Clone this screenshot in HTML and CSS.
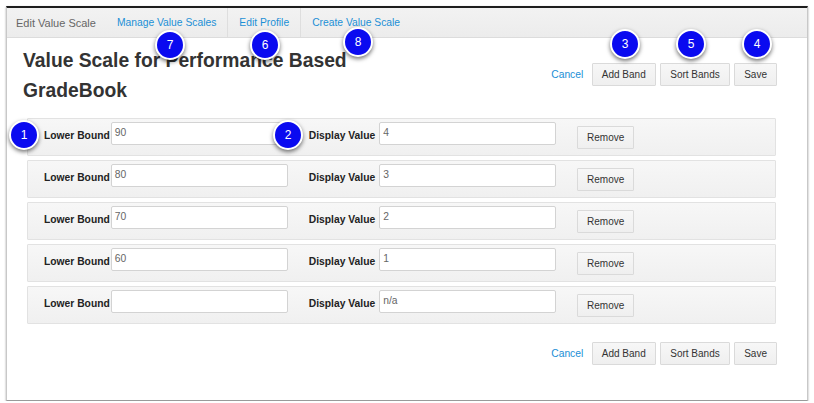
FILE: index.html
```html
<!DOCTYPE html>
<html>
<head>
<meta charset="utf-8">
<link rel="stylesheet" href="styles.css">
</head>
<body>
<div class="window">
  <nav class="nav">
    <span class="brand">Edit Value Scale</span>
    <a class="nav-link">Manage Value Scales</a>
    <a class="nav-link sep">Edit Profile</a>
    <a class="nav-link sep">Create Value Scale</a>
  </nav>
  <main class="content">
    <div class="header">
      <h1 class="title">Value Scale for Performance Based GradeBook</h1>
      <div class="actions">
        <a class="cancel">Cancel</a>
        <button class="btn">Add Band</button>
        <button class="btn">Sort Bands</button>
        <button class="btn">Save</button>
      </div>
    </div>
    <div class="bands">
      <div class="band">
        <label class="lbl lbl-lower">Lower Bound</label><div class="field">90</div>
        <label class="lbl lbl-display">Display Value</label><div class="field">4</div>
        <button class="btn btn-remove">Remove</button>
      </div>
      <div class="band">
        <label class="lbl lbl-lower">Lower Bound</label><div class="field">80</div>
        <label class="lbl lbl-display">Display Value</label><div class="field">3</div>
        <button class="btn btn-remove">Remove</button>
      </div>
      <div class="band">
        <label class="lbl lbl-lower">Lower Bound</label><div class="field">70</div>
        <label class="lbl lbl-display">Display Value</label><div class="field">2</div>
        <button class="btn btn-remove">Remove</button>
      </div>
      <div class="band">
        <label class="lbl lbl-lower">Lower Bound</label><div class="field">60</div>
        <label class="lbl lbl-display">Display Value</label><div class="field">1</div>
        <button class="btn btn-remove">Remove</button>
      </div>
      <div class="band">
        <label class="lbl lbl-lower">Lower Bound</label><div class="field"></div>
        <label class="lbl lbl-display">Display Value</label><div class="field">n/a</div>
        <button class="btn btn-remove">Remove</button>
      </div>
    </div>
    <div class="actions actions-bottom">
      <a class="cancel">Cancel</a>
      <button class="btn">Add Band</button>
      <button class="btn">Sort Bands</button>
      <button class="btn">Save</button>
    </div>
  </main>
</div>
<div class="badge b7">7</div>
<div class="badge b6">6</div>
<div class="badge b8">8</div>
<div class="badge b3">3</div>
<div class="badge b5">5</div>
<div class="badge b4">4</div>
<div class="badge b1">1</div>
<div class="badge b2">2</div>
</body>
</html>
```
FILE: styles.css
```css
html, body {
  margin: 0;
  padding: 0;
  background: #ffffff;
  font-family: "Liberation Sans", Arial, Helvetica, sans-serif;
  font-size: 10.3px;
  color: #333333;
}

.window {
  margin: 6px 6px 0 6px;
  height: 392px;
  border-top: 2px solid #1e1e1e;
  border-left: 1px solid #c8c8c8;
  border-right: 1px solid #c8c8c8;
  border-bottom: 1px solid #9a9a9a;
  box-shadow: 0 1px 2px rgba(0,0,0,0.35);
  background: #ffffff;
}

.nav {
  display: flex;
  align-items: stretch;
  height: 29px;
  background: linear-gradient(#f2f2f2, #ececec);
  border-bottom: 1px solid #dcdcdc;
}

.brand {
  display: flex;
  align-items: center;
  padding: 0 10px 0 9px;
  color: #666666;
  font-size: 11px;
}

.nav-link {
  display: flex;
  align-items: center;
  padding: 0 11px;
  color: #1b8fd6;
  font-size: 10.3px;
}

.nav-link.sep {
  border-left: 1px solid #dedede;
}

.content {
  padding: 0 30px 0 16px;
}

.header {
  display: flex;
  justify-content: space-between;
  align-items: flex-start;
  margin-top: 8px;
}

.title {
  width: 380px;
  margin: 0;
  font-size: 19.3px;
  line-height: 30px;
  font-weight: bold;
  color: #333333;
}

.actions {
  display: flex;
  align-items: center;
  gap: 4.5px;
  margin-top: 17px;
}

.cancel {
  color: #1b8fd6;
  margin-right: 4px;
  font-size: 10.3px;
}

.btn {
  height: 23px;
  padding: 0 9px;
  border: 1px solid #dadada;
  border-radius: 1px;
  background: linear-gradient(#f7f7f7, #efefef);
  color: #333333;
  font-family: "Liberation Sans", Arial, Helvetica, sans-serif;
  font-size: 10px;
}

.bands {
  display: flex;
  flex-direction: column;
  gap: 4px;
  margin: 12px 1px 0 4px;
}

.band {
  display: flex;
  align-items: flex-start;
  height: 38px;
  box-sizing: border-box;
  padding: 3px 0 0 16px;
  border: 1px solid #e2e2e2;
  border-radius: 1px;
  background: linear-gradient(#f7f7f7, #f0f0f0);
}

.lbl {
  font-weight: bold;
  font-size: 10.3px;
  line-height: 23px;
  padding-top: 2px;
  color: #222222;
}

.lbl-lower {
  margin-right: 1px;
}

.lbl-display {
  margin-left: 21px;
  margin-right: 4px;
}

.field {
  width: 177px;
  height: 23px;
  box-sizing: border-box;
  padding: 0 3px 2px 3px;
  line-height: 19px;
  border: 1px solid #d3d3d3;
  border-radius: 2px;
  background: #ffffff;
  color: #666666;
  font-size: 10.3px;
}

.btn-remove {
  margin-left: 21px;
  margin-top: 4px;
  width: 57px;
  padding: 0;
}

.actions-bottom {
  justify-content: flex-end;
  margin-top: 18px;
}

.badge {
  position: absolute;
  width: 26px;
  height: 26px;
  margin: -15px 0 0 -15px;
  border: 2px solid #ffffff;
  border-radius: 50%;
  background: #0a0af0;
  color: #ffffff;
  font-size: 12px;
  line-height: 26px;
  text-align: center;
  box-shadow: 0 2px 4px rgba(0,0,0,0.55);
}

.b7 { left: 170px; top: 45px; }
.b6 { left: 265px; top: 45px; }
.b8 { left: 358px; top: 42px; }
.b3 { left: 625px; top: 44px; }
.b5 { left: 691px; top: 44px; }
.b4 { left: 757px; top: 44px; }
.b1 { left: 24px; top: 135px; }
.b2 { left: 288px; top: 135px; }
```
